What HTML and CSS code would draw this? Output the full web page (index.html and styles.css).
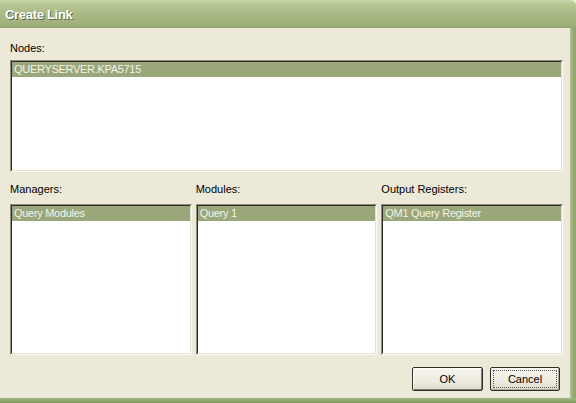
FILE: index.html
```html
<!DOCTYPE html>
<html>
<head>
<meta charset="utf-8">
<link rel="stylesheet" href="styles.css">
</head>
<body>
<div class="window">
  <div class="titlebar"><span class="title">Create Link</span></div>
  <div class="frame">
    <div class="content">
      <div class="label nodes-label">Nodes:</div>
      <div class="listbox nodes">
        <div class="inner"><div class="item selected">QUERYSERVER.KPA5715</div></div>
      </div>
      <div class="columns">
        <div class="col">
          <div class="label col-label">Managers:</div>
          <div class="listbox tall"><div class="inner"><div class="item selected">Query Modules</div></div></div>
        </div>
        <div class="col">
          <div class="label col-label">Modules:</div>
          <div class="listbox tall"><div class="inner"><div class="item selected">Query 1</div></div></div>
        </div>
        <div class="col">
          <div class="label col-label">Output Registers:</div>
          <div class="listbox tall"><div class="inner"><div class="item selected">QM1 Query Register</div></div></div>
        </div>
      </div>
      <div class="buttons">
        <div class="btn default"><span>OK</span></div>
        <div class="btn focus"><span class="focusrect">Cancel</span></div>
      </div>
    </div>
    <div class="rightframe"></div>
  </div>
  <div class="bottomframe"></div>
</div>
</body>
</html>
```
FILE: styles.css
```css
html, body {
  margin: 0;
  padding: 0;
  background: #ece9d8;
}
.window {
  width: 576px;
  height: 403px;
  display: flex;
  flex-direction: column;
  font-family: "Liberation Sans", Arial, sans-serif;
  font-size: 11px;
  color: #000;
  overflow: hidden;
}
.titlebar {
  height: 28px;
  flex: none;
  background: linear-gradient(#c9d5a8 0px, #b7c794 4px, #a9ba86 14px, #9fb07b 24px, #95a872 28px);
  border-top-right-radius: 6px;
  box-sizing: border-box;
  padding-left: 5px;
  display: flex;
  align-items: center;
}
.title {
  font-size: 13px;
  font-weight: bold;
  color: #ffffff;
  text-shadow: 1px 1px 0 #5d6a44;
  letter-spacing: -0.3px;
}
.frame {
  flex: 1;
  display: flex;
}
.content {
  flex: 1;
  padding: 0 7px 0 10px;
  display: flex;
  flex-direction: column;
}
.rightframe {
  width: 6px;
  flex: none;
  background: linear-gradient(90deg, #b9c79c 0, #9db07a 2px, #8fa36c 6px);
}
.bottomframe {
  height: 5px;
  flex: none;
  background: linear-gradient(#a4b585 0, #8fa36c 3px, #7f935e 5px);
}
.label {
  height: 14px;
  line-height: 14px;
}
.nodes-label {
  margin-top: 13px;
  margin-bottom: 5px;
}
.listbox {
  box-sizing: border-box;
  border: 1px solid;
  border-color: #8d8b7c #fbfaf6 #fbfaf6 #8d8b7c;
  background: #fff;
}
.listbox .inner {
  height: 100%;
  box-sizing: border-box;
  border: 1px solid;
  border-color: #2e2e26 #e4e1d2 #e4e1d2 #2e2e26;
  background: #fff;
}
.nodes {
  height: 112px;
}
.item {
  height: 15px;
  line-height: 15px;
  padding-left: 2px;
  white-space: nowrap;
  letter-spacing: -0.3px;
}
.selected {
  background: #9aa77b;
  color: #f3f3e6;
}
.columns {
  display: flex;
  gap: 4px;
}
.col {
  flex: 1;
  display: flex;
  flex-direction: column;
}
.col-label {
  margin-top: 10px;
  margin-bottom: 8px;
}
.tall {
  height: 151px;
}
.buttons {
  display: flex;
  justify-content: flex-end;
  gap: 7px;
  margin-top: 12px;
  padding-right: 3px;
}
.btn {
  width: 71px;
  height: 24px;
  box-sizing: border-box;
  border: 1px solid #2f2f2a;
  border-radius: 2px;
  background: linear-gradient(#f7f6f0, #ebe8db 70%, #dedbcb);
  display: flex;
  align-items: center;
  justify-content: center;
  font-size: 11px;
}
.btn.default {
  box-shadow: inset 1px 1px 0 #fff, inset -1px -1px 0 #7d7b70;
}
.btn.focus {
  width: 70px;
  padding: 2px;
  box-shadow: inset -1px -1px 0 #a9a795;
}
.focusrect {
  flex: 1;
  align-self: stretch;
  border: 1px dotted #555;
  display: flex;
  align-items: center;
  justify-content: center;
}
```
